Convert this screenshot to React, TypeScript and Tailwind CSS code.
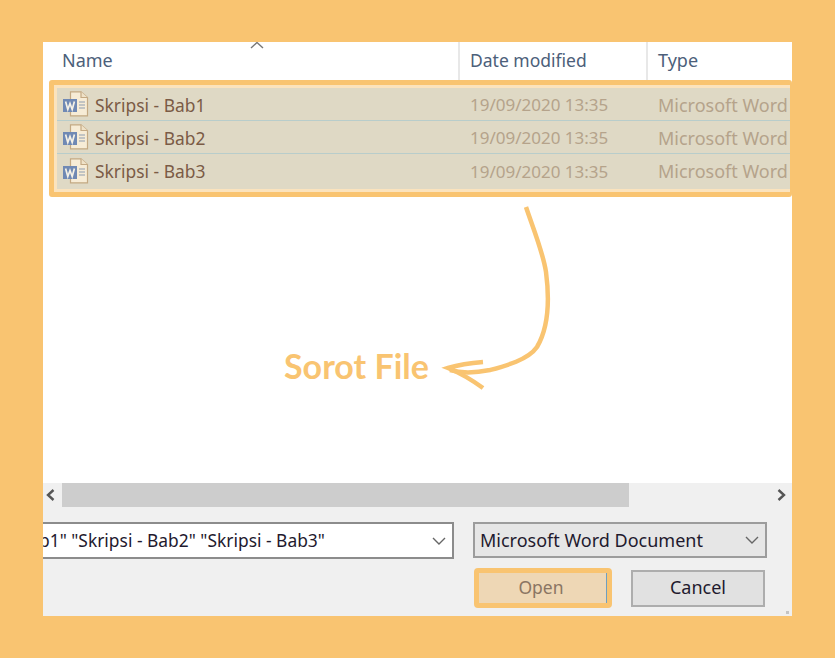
const ui = { fontFamily: '"Noto Sans", "Open Sans", sans-serif' };

function WordIcon() {
  return (
    <svg width="26" height="26" viewBox="0 0 26 26" className="shrink-0">
      <path d="M7.5 0.8H18L24.5 6.5V24.8H7.5Z" fill="#f7ecd6" stroke="#c4a983" strokeWidth="1.2" />
      <path d="M18 0.8V6.5H24.5" fill="#efe2c8" stroke="#c4a983" strokeWidth="1.2" />
      <path d="M16 11H22M16 14H22M16 17H22" stroke="#8d9bb0" strokeWidth="1.2" />
      <rect x="0" y="8" width="14" height="13" fill="#7089b4" />
      <path d="M2.6 10.5L4.8 18.5L7 12.5L9.2 18.5L11.4 10.5" fill="none" stroke="#f5f1e6" strokeWidth="1.7" />
    </svg>
  );
}

function Row({ name, last }: { name: string; last?: boolean }) {
  return (
    <div className={"flex items-center h-[33px] pl-[6px] " + (last ? "" : "border-b border-[#b8cdcb]")}>
      <WordIcon />
      <span className="w-[375px] ml-[6px] pt-[2px] text-[#7b5b45] text-[17.4px] whitespace-nowrap">{name}</span>
      <span className="w-[188px] pt-[2px] text-[#b5a38b] text-[17px] whitespace-nowrap">19/09/2020 13:35</span>
      <span className="pt-[2px] text-[#b5a38b] text-[18px] whitespace-nowrap">Microsoft Word</span>
    </div>
  );
}

function Chevron({ dir }: { dir: "down" | "left" | "right" }) {
  if (dir === "down") {
    return (
      <svg width="14" height="8" viewBox="0 0 14 8">
        <path d="M1 1L7 7L13 1" fill="none" stroke="#666" strokeWidth="1.4" />
      </svg>
    );
  }
  return (
    <svg width="9" height="12" viewBox="0 0 9 12">
      <path d={dir === "left" ? "M7.5 1L2 6L7.5 11" : "M1.5 1L7 6L1.5 11"} fill="none" stroke="#555" strokeWidth="2.4" />
    </svg>
  );
}

export default function App() {
  return (
    <div className="w-[835px] h-[658px] bg-[#f9c471] pt-[42px] pl-[43px] overflow-hidden" style={ui}>
      <div className="relative w-[749px] h-[574px] bg-white flex flex-col overflow-hidden">
        {/* header */}
        <div className="flex h-[38px] shrink-0 text-[18px] text-[#4c607a]">
          <div className="w-[417px] pl-[19px] pt-[5px] border-r-2 border-[#e8e8e8]">Name</div>
          <div className="w-[188px] pl-[10px] pt-[5px] border-r-2 border-[#e8e8e8] text-[17.5px]">Date modified</div>
          <div className="pl-[10px] pt-[5px]">Type</div>
        </div>

        {/* selected rows */}
        <div className="ml-[6px] w-[743px] h-[117px] shrink-0 border-[5px] border-r-2 border-[#f9c471] rounded-[3px] bg-[#fbe3bd] pt-[3px] pb-[3px] pl-[3px]">
          <div className="bg-[#dfd9c5] h-[101px] overflow-hidden">
            <Row name="Skripsi - Bab1" />
            <Row name="Skripsi - Bab2" />
            <Row name="Skripsi - Bab3" last />
          </div>
        </div>

        <div className="flex-1" />

        {/* scrollbar */}
        <div className="flex items-center h-[24px] shrink-0 bg-[#f0f0f0]">
          <div className="w-[19px] flex justify-center pr-[4px]">
            <Chevron dir="left" />
          </div>
          <div className="w-[567px] h-full bg-[#cdcdcd]" />
          <div className="flex-1 flex justify-end pr-[6px]">
            <Chevron dir="right" />
          </div>
        </div>

        {/* bottom */}
        <div className="h-[109px] shrink-0 bg-[#f0f0f0] text-[18px] text-[#1f1a2e]">
          <div className="flex items-start gap-[19px] pt-[15px]">
            <div className="flex items-center justify-between w-[411px] h-[37px] bg-white border-2 border-l-0 border-[#8c8c8c] pr-[6px] overflow-hidden">
              <span className="ml-[-4px] text-[17.4px] whitespace-nowrap">b1" "Skripsi - Bab2" "Skripsi - Bab3"</span>
              <Chevron dir="down" />
            </div>
            <div className="flex items-center justify-between w-[294px] h-[36px] bg-[#e6e6e6] border-2 border-[#9c9c9c] pl-[5px] pr-[6px]">
              <span className="whitespace-nowrap">Microsoft Word Document</span>
              <Chevron dir="down" />
            </div>
          </div>
          <div className="flex items-center gap-[19px] ml-[431px] mt-[9px]">
            <div className="flex items-center justify-center w-[138px] h-[40px] border-[5px] border-[#f9c471] rounded-[4px] bg-[#eed7b5] text-[#8a7563] text-[17.5px] pr-[4px] pb-[2px] relative">
              Open
              <div className="absolute right-0 top-0 bottom-0 w-px bg-[#6f9fc0]" />
            </div>
            <div className="flex items-center justify-center w-[134px] h-[37px] border-2 border-[#adadad] bg-[#e1e1e1] pb-[2px]">
              Cancel
            </div>
          </div>
          <div className="absolute right-[3px] bottom-[2px] w-[3px] h-[3px] bg-[#c4c4c4]" />
        </div>

        {/* sort caret */}
        <svg className="absolute left-[207px] top-0" width="14" height="7" viewBox="0 0 14 7">
          <path d="M1 6L7 0.5L13 6" fill="none" stroke="#777" strokeWidth="1.4" />
        </svg>

        {/* annotation */}
        <svg className="absolute left-0 top-0 pointer-events-none" width="749" height="574" viewBox="43 42 749 574">
          <path
            d="M526 207C533 228 543 252 546 272C549 295 550 325 537 347C528 360 505 366 490 370C475 373 460 373 450 370"
            fill="none"
            stroke="#f9c471"
            strokeWidth="4.5"
          />
          <path d="M483 362C470 363 458 365 448 368C460 373 472 380 483 388" fill="none" stroke="#f9c471" strokeWidth="4.5" />
        </svg>
        <div
          className="absolute left-[241px] top-[302px] text-[34px] leading-[44px] font-bold text-[#f9c471] whitespace-nowrap"
          style={{ fontFamily: 'Lato, "Open Sans", sans-serif' }}
        >
          Sorot File
        </div>
      </div>
    </div>
  );
}
